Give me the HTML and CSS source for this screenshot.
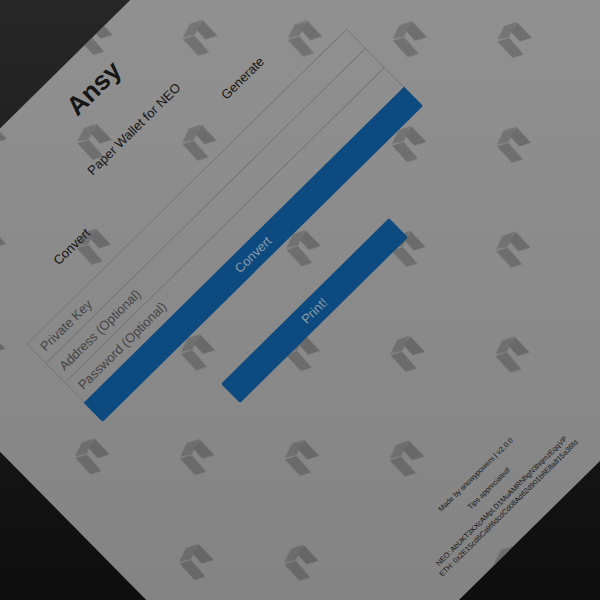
FILE: index.html
```html
<!DOCTYPE html>
<html lang="en">
<head>
<meta charset="utf-8">
<title>Ansy</title>
<link rel="stylesheet" href="styles.css">
</head>
<body>
<main class="sheet">
  <svg class="pattern" width="780" height="658" aria-hidden="true">
    <defs>
      <pattern id="logos" patternUnits="userSpaceOnUse" x="-52" y="-52" width="104.85" height="104.85" patternTransform="translate(432.7 75.7) rotate(45)">
        <g transform="translate(52 52)">
          <path fill="#000" fill-opacity=".19" d="M1.7-18-10-14-16.7-.3-5-2.7Z"/>
          <path fill="#000" fill-opacity=".23" d="M2.5-18 17.7-2.3 5.7 1.3-3-8Z"/>
          <path fill="#000" fill-opacity=".21" d="M-16.7 1.3-5-2 9.5 14.3-1.3 18Z"/>
        </g>
      </pattern>
    </defs>
    <path fill="url(#logos)" fill-rule="evenodd" d="M8 0H780V548H8ZM93.5 171.5H544V280.5H93.5ZM8 645H780V658H8Z"/>
  </svg>
  <header class="head">
    <h1>Ansy</h1>
    <p>Paper Wallet for NEO</p>
  </header>
  <nav class="tabs"><a>Convert</a><a>Generate</a></nav>
  <form class="form">
    <div class="field">Private Key</div>
    <div class="field">Address (Optional)</div>
    <div class="field">Password (Optional)</div>
    <div class="submit">Convert</div>
  </form>
  <div class="print">Print!</div>
  <footer class="foot">
    <p>Made by snowypowers | v2.0.0</p>
    <p class="tips">Tips appreciated!</p>
    <p>NEO: AbUKT3KXcAMpLD1MuAMRNhgN3hqmzEqqVP</p>
    <p>ETH: 0x2E15cd6Ca9f6dcdCd08Ad62d901b6E8a815a36fd</p>
  </footer>
</main>
</body>
</html>
```
FILE: styles.css
```css
* { box-sizing: border-box; margin: 0; padding: 0; }
html { height: 100%; overflow: hidden; background: #111; }
body {
  width: 600px;
  height: 600px;
  overflow: hidden;
  background: linear-gradient(#272727, #0e0e0e);
  font-family: "Liberation Sans", Arial, sans-serif;
  color: #151515;
}
.sheet {
  width: 780px;
  height: 657.5px;
  overflow: hidden;
  position: relative;
  background: rgba(255, 255, 255, .49);
  transform-origin: 0 0;
  transform: translate(-161.6px, 287.8px) rotate(-44.6deg);
  padding: 20px 0 0 75px;
}
.pattern { position: absolute; inset: 0; }
.head, .tabs, .form, .print, .foot { position: relative; }
.head { width: 494px; height: 106px; text-align: center; }
.head h1 { font-size: 26.2px; line-height: 34px; }
.head p { margin-top: 32px; font-size: 13px; line-height: 18px; }
.tabs {
  width: 480px;
  display: grid;
  grid-template-columns: 1fr 1fr;
  text-align: center;
  font-size: 13px;
  line-height: 18px;
}
.form {
  width: 450px;
  margin: 27.5px 0 0 18.5px;
  border: 1px solid #757575;
  border-bottom: 0;
  border-radius: 2px;
}
.field {
  height: 27.2px;
  padding-left: 8px;
  border-bottom: 1px solid #757575;
  color: #444;
  font-size: 13px;
  line-height: 27px;
}
.field:nth-child(3) { border-bottom-color: transparent; }
.submit, .print {
  height: 27px;
  border-radius: 2px;
  background: #0c4a80;
  color: #8d9aa6;
  font-size: 13px;
  line-height: 27px;
  text-align: center;
}
.submit { margin: 0 -1px; border-radius: 0 0 2px 2px; }
.print { width: 236.5px; margin: 56.3px 0 0 129.5px; }
.foot {
  width: 495px;
  margin-top: 211.5px;
  text-align: center;
  font-size: 7.4px;
  line-height: 10px;
}
.foot .tips { margin: 9px 0 8px; }
```
